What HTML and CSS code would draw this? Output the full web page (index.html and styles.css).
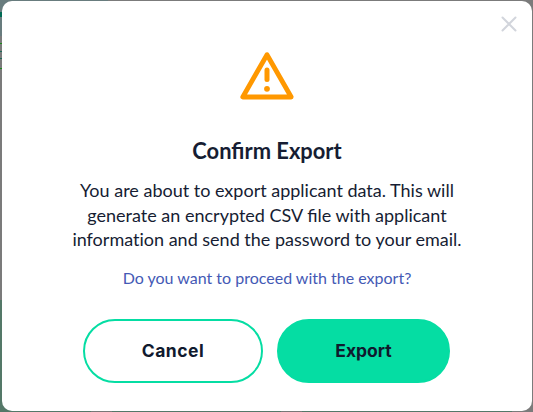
FILE: index.html
```html
<!DOCTYPE html>
<html lang="en">
<head>
<meta charset="utf-8">
<title>Confirm Export</title>
<link rel="stylesheet" href="styles.css">
</head>
<body>
<div class="backdrop">
  <div class="modal" role="dialog" aria-labelledby="title">
    <button class="close" aria-label="Close">
      <svg width="16" height="16" viewBox="0 0 16 16"><path d="M1.5 1.5 14.5 14.5M14.5 1.5 1.5 14.5"/></svg>
    </button>
    <svg class="warning" width="56" height="50" viewBox="0 0 56 50">
      <path class="tri" d="M28 3.7 3.8 46H52.2Z"/>
      <path class="bar" d="M28 19V28.5"/>
      <circle cx="28" cy="37.8" r="2.9"/>
    </svg>
    <h1 class="title" id="title">Confirm Export</h1>
    <p class="message">
      <span class="line">You are about to export applicant data. This will</span>
      <span class="line">generate an encrypted CSV file with applicant</span>
      <span class="line plain">information and send the password to your email.</span>
    </p>
    <p class="question">Do you want to proceed with the export?</p>
    <div class="actions">
      <button class="btn cancel">Cancel</button>
      <button class="btn export">Export</button>
    </div>
  </div>
</div>
</body>
</html>
```
FILE: styles.css
```css
* { box-sizing: border-box; }
body { margin: 0; overflow: hidden; }
.backdrop {
  width: 533px;
  height: 412px;
  padding: 1px 1px 1px 2px;
  background:
    linear-gradient(#006b55, #006b55) 0 12px / 2px 5px no-repeat,
    linear-gradient(#188918, #188918) 0 43px / 2px 1px no-repeat,
    linear-gradient(#1c6858, #1c6858) 0 51px / 2px 1px no-repeat,
    linear-gradient(#1c6858, #1c6858) 0 58px / 2px 1px no-repeat,
    linear-gradient(#188918, #188918) 0 68px / 2px 1px no-repeat,
    linear-gradient(#687c7e, #687c7e) 0 0 / 108px 36px no-repeat,
    linear-gradient(#777, #777) 91px 411px / 21px 1px no-repeat,
    linear-gradient(#777, #777) 281px 411px / 21px 1px no-repeat,
    linear-gradient(#547868, #547868) 0 300px / 512px 112px no-repeat,
    #7b7b7b;
}
.modal {
  position: relative;
  height: 410px;
  border-radius: 10px;
  background: #fff;
  display: flex;
  flex-direction: column;
  align-items: center;
  color: #161d33;
  font-family: Lato, sans-serif;
}
.close {
  position: absolute;
  top: 15px;
  right: 15px;
  width: 16px;
  height: 16px;
  padding: 0;
  border: 0;
  background: none;
}
.close svg { display: block; }
.close path { stroke: #d2d5dc; stroke-width: 2; stroke-linecap: round; }
.warning { margin: 50px 0 0; flex: none; fill: #ff9800; }
.warning .tri { fill: none; stroke: #ff9800; stroke-width: 4.8; stroke-linejoin: round; }
.warning .bar { stroke: #ff9800; stroke-width: 5; stroke-linecap: round; }
.title {
  margin: 35px 0 0;
  font-size: 21.9px;
  line-height: 30px;
  font-weight: 700;
  white-space: nowrap;
}
.message { margin: 12px 0 0; font-size: 18px; line-height: 24.5px; text-align: center; }
.line { display: block; white-space: nowrap; }
.plain { font-variant-ligatures: none; }
.question {
  margin: 14.5px 0 0;
  color: #4459b5;
  font-size: 16px;
  line-height: 24px;
  white-space: nowrap;
}
.actions { display: flex; gap: 14px; margin: 29px 1px 0 0; }
.btn {
  height: 64px;
  padding: 0;
  border: 2px solid #05dda3;
  border-radius: 32px;
  color: #101a2e;
  font: 700 17.5px/24px Inter, sans-serif;
}
.cancel { width: 180px; background: #fff; letter-spacing: 0.5px; }
.export { width: 173px; background: #05dda3; }
```
